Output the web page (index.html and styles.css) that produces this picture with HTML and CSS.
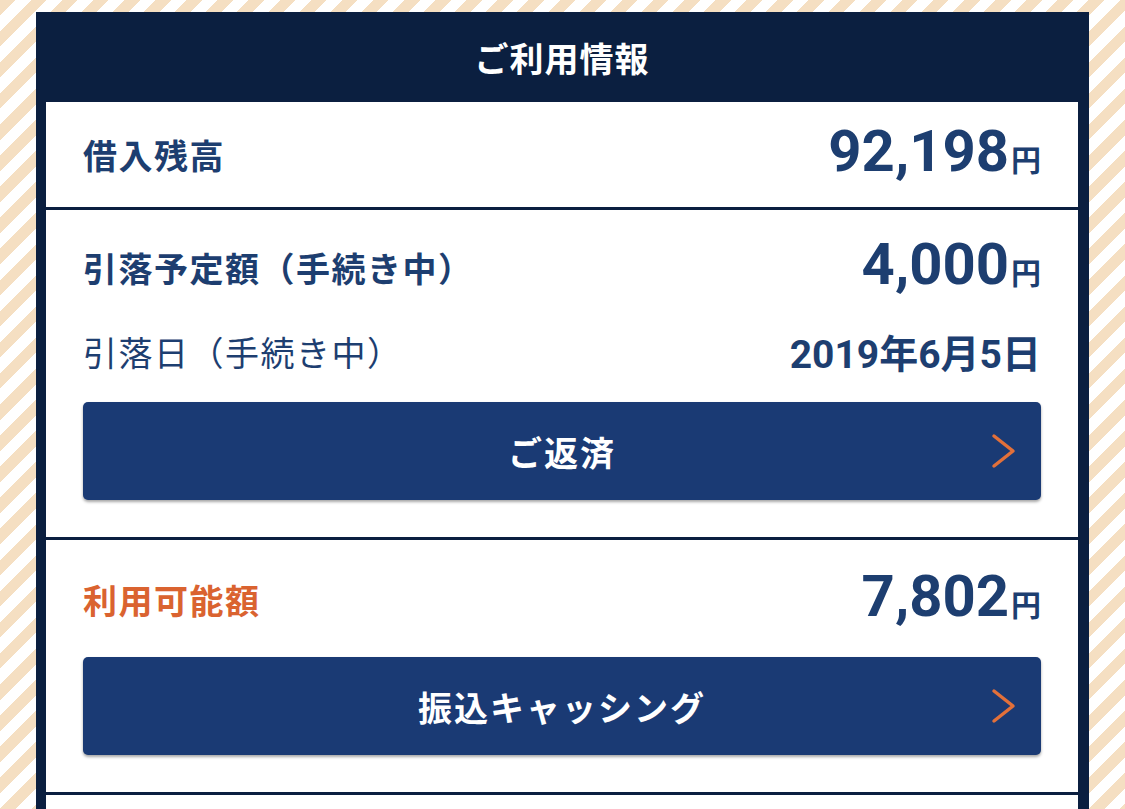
FILE: index.html
```html
<!DOCTYPE html>
<html lang="ja">
<head>
    <meta charset="UTF-8">
    <meta name="viewport" content="width=device-width, initial-scale=1.0">
    <title>ご利用情報</title>
    <link rel="stylesheet" href="styles.css">
</head>
<body>

    <div class="card">
        <div class="card-head">ご利用情報</div>

        <div class="rows">
            <div class="row balance">
                <div class="label">借入残高</div>
                <div class="amount">92,198<span class="yen">円</span></div>
            </div>

            <div class="row payment">
                <div class="line">
                    <div class="label">引落予定額（手続き中）</div>
                    <div class="amount">4,000<span class="yen">円</span></div>
                </div>
                <div class="line sub">
                    <div class="label light">引落日（手続き中）</div>
                    <div class="date">2019年6月5日</div>
                </div>
                <a class="btn" href="#">
                    ご返済
                    <svg class="chev" width="26" height="36" viewBox="0 0 26 36">
                        <polyline points="3,3 22,18 3,33" fill="none" stroke="#e2703a" stroke-width="3.5" stroke-linecap="round" stroke-linejoin="round"/>
                    </svg>
                </a>
            </div>

            <div class="row available">
                <div class="line">
                    <div class="label orange">利用可能額</div>
                    <div class="amount">7,802<span class="yen">円</span></div>
                </div>
                <a class="btn" href="#">
                    振込キャッシング
                    <svg class="chev" width="26" height="36" viewBox="0 0 26 36">
                        <polyline points="3,3 22,18 3,33" fill="none" stroke="#e2703a" stroke-width="3.5" stroke-linecap="round" stroke-linejoin="round"/>
                    </svg>
                </a>
            </div>

            <div class="row empty"></div>
        </div>
    </div>

</body>
</html>
```

FILE: styles.css
```css
body {
    margin: 0;
    padding: 12px 36px 0;
    font-family: "Noto Sans CJK JP", sans-serif;
    color: #1d3e70;
    background-color: #fff;
    background-image: repeating-linear-gradient(135deg, #f5dfc2 0 11px, #fff 11px 22px);
    height: 797px;
    overflow: hidden;
}

.card {
    background: #0b1f40;
    padding: 0 11px 0 10px;
    height: 100%;
}

.card-head {
    height: 90px;
    display: flex;
    align-items: center;
    justify-content: center;
    color: #fff;
    font-size: 34px;
    font-weight: bold;
    letter-spacing: 1px;
}

.rows {
    display: flex;
    flex-direction: column;
    gap: 3px;
}

.row {
    background: #fff;
    padding: 0 37px;
}

.balance {
    height: 105px;
    display: flex;
    justify-content: space-between;
    align-items: center;
}

.line {
    height: 54px;
    display: flex;
    justify-content: space-between;
    align-items: center;
}

.payment {
    height: 327px;
    padding-top: 30px;
    box-sizing: border-box;
}

.payment .sub {
    margin-top: 30px;
}

.available {
    height: 252px;
    padding-top: 32px;
    box-sizing: border-box;
}

.empty {
    height: 40px;
}

.label {
    font-size: 34px;
    font-weight: bold;
    letter-spacing: 1.5px;
}

.label.light {
    font-weight: normal;
}

.label.orange {
    color: #da6330;
}

.amount {
    font-family: Roboto, sans-serif;
    font-size: 58px;
    font-weight: bold;
    line-height: 60px;
}

.yen {
    font-family: "Noto Sans CJK JP", sans-serif;
    font-size: 30px;
    margin-left: 2px;
}

.date {
    font-family: Roboto, "Noto Sans CJK JP", sans-serif;
    font-size: 39px;
    font-weight: bold;
}

.btn {
    position: relative;
    display: flex;
    align-items: center;
    justify-content: center;
    height: 98px;
    margin-top: 24px;
    background: #1a3a74;
    border-radius: 5px;
    box-shadow: 0 2px 3px rgba(0, 0, 0, 0.35);
    color: #fff;
    font-size: 34px;
    font-weight: bold;
    letter-spacing: 2px;
    text-decoration: none;
}

.available .btn {
    margin-top: 31px;
}

.chev {
    position: absolute;
    right: 24px;
    top: 31px;
}
```
